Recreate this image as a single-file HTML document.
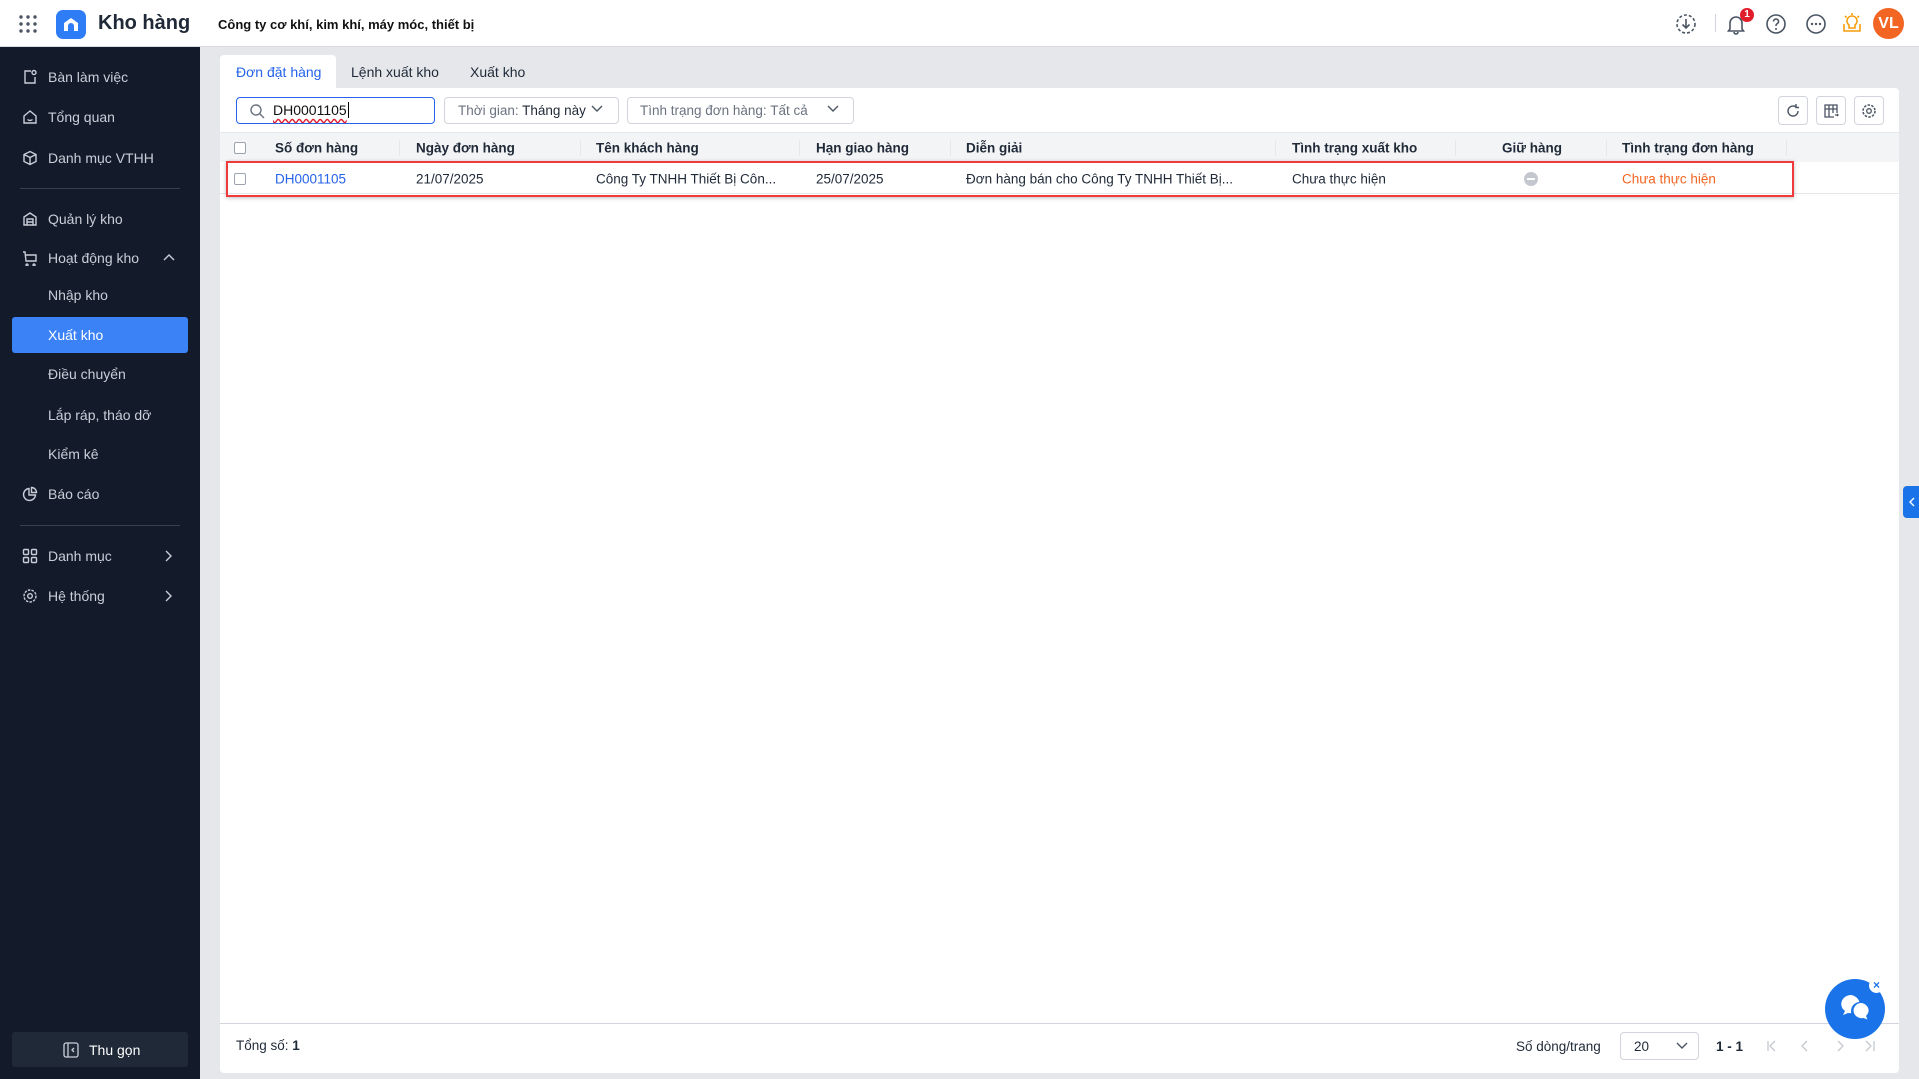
<!DOCTYPE html>
<html><head><meta charset="utf-8"><style>
*{box-sizing:border-box;margin:0;padding:0}
body{width:1919px;height:1079px;overflow:hidden;font-family:"Liberation Sans",sans-serif;font-size:14px;color:#1f2937;background:#e5e7eb;position:relative}
.a{position:absolute;white-space:nowrap}
#hdr{left:0;top:0;width:1919px;height:47px;background:#fff;border-bottom:1px solid #d9dbe0}
#sb{left:0;top:47px;width:200px;height:1032px;background:#131a2a}
.si{position:absolute;left:48px;color:#c9ced8;font-size:14px;transform:translateY(-50%)}
.ic{position:absolute;left:22px;transform:translateY(-50%)}
.hr{position:absolute;left:20px;width:160px;height:1px;background:#374151}
#card{left:220px;top:88px;width:1679px;height:985px;background:#fff;border-radius:0 4px 4px 4px}
.th{position:absolute;top:148px;transform:translateY(-50%);font-weight:bold;font-size:13.5px;color:#1f2937}
.td{position:absolute;top:179px;transform:translateY(-50%);font-size:13.5px;color:#1f2937}
.sep{position:absolute;top:140px;width:1px;height:16px;background:#e5e7eb}
.box{position:absolute;border:1px solid #d1d5db;border-radius:4px;background:#fff}
.cb{position:absolute;width:12px;height:12px;border:1px solid #9ca3af;border-radius:2px;background:#fff}
</style></head><body>
<div class="a" id="hdr"></div>
<svg class="a" style="left:19px;top:15px" width="18" height="18"><g fill="#4b5563"><circle cx="2" cy="2" r="1.7"/><circle cx="9" cy="2" r="1.7"/><circle cx="16" cy="2" r="1.7"/><circle cx="2" cy="9" r="1.7"/><circle cx="9" cy="9" r="1.7"/><circle cx="16" cy="9" r="1.7"/><circle cx="2" cy="16" r="1.7"/><circle cx="9" cy="16" r="1.7"/><circle cx="16" cy="16" r="1.7"/></g></svg>
<div class="a" style="left:56px;top:10px;width:30px;height:29px;background:#2f7df6;border-radius:7px"></div>
<svg class="a" style="left:61px;top:14px" width="20" height="20"><path d="M3 17V9l7-5 7 5v8h-4v-5a3 3 0 0 0-6 0v5z" fill="#fff"/></svg>
<div class="a" style="left:98px;top:12px;font-size:20px;font-weight:bold;color:#1f2937">Kho hàng</div>
<div class="a" style="left:218px;top:17px;font-size:13px;font-weight:bold;color:#111">Công ty cơ khí, kim khí, máy móc, thiết bị</div>
<svg class="a" style="left:1675px;top:13px" width="22" height="22"><circle cx="11" cy="11" r="9" fill="none" stroke="#4b5563" stroke-width="1.6" stroke-dasharray="3 2"/><path d="M11 6v9M7.5 11.5l3.5 3.5 3.5-3.5" fill="none" stroke="#4b5563" stroke-width="1.6"/></svg>
<div class="a" style="left:1715px;top:14px;width:1px;height:18px;background:#d1d5db"></div>
<svg class="a" style="left:1725px;top:13px" width="22" height="22"><path d="M5 16V10a6 6 0 0 1 12 0v6l1.5 2h-15zM9 19a2 2 0 0 0 4 0" fill="none" stroke="#4b5563" stroke-width="1.6"/></svg>
<div class="a" style="left:1740px;top:8px;width:14px;height:14px;border-radius:7px;background:#e11d2b;color:#fff;font-size:10px;font-weight:bold;text-align:center;line-height:14px">1</div>
<svg class="a" style="left:1765px;top:13px" width="22" height="22"><circle cx="11" cy="11" r="9" fill="none" stroke="#4b5563" stroke-width="1.6"/><path d="M8.5 8.5a2.5 2.5 0 1 1 3.5 2.3c-.7.4-1 .9-1 1.7v.5" fill="none" stroke="#4b5563" stroke-width="1.6"/><circle cx="11" cy="16" r="1" fill="#4b5563"/></svg>
<svg class="a" style="left:1805px;top:13px" width="22" height="22"><circle cx="11" cy="11" r="9" fill="none" stroke="#4b5563" stroke-width="1.6"/><g fill="#4b5563"><circle cx="7" cy="11" r="1.2"/><circle cx="11" cy="11" r="1.2"/><circle cx="15" cy="11" r="1.2"/></g></svg>
<svg class="a" style="left:1841px;top:12px" width="22" height="22"><path d="M11 4a5 5 0 0 0-3 9v3h6v-3a5 5 0 0 0-3-9zM3 12v7h16v-7M11 1v2M4 4l1.5 1.5M18 4l-1.5 1.5" fill="none" stroke="#f59e0b" stroke-width="1.6"/></svg>
<div class="a" style="left:1873px;top:8px;width:31px;height:31px;border-radius:50%;background:#f26522;color:#fff;font-weight:bold;font-size:16px;text-align:center;line-height:31px">VL</div>

<div class="a" id="sb">
<svg class="ic" style="top:30px" width="16" height="16"><path d="M9 2H3v12h10V8" fill="none" stroke="#c9ced8" stroke-width="1.4"/><circle cx="12" cy="3.5" r="2" fill="none" stroke="#c9ced8" stroke-width="1.4"/></svg><div class="si" style="top:30px">Bàn làm việc</div>
<svg class="ic" style="top:70px" width="16" height="16"><path d="M2 7l6-5 6 5v7H2zM5.5 10.5q2.5 2 5 0" fill="none" stroke="#c9ced8" stroke-width="1.4"/></svg><div class="si" style="top:70px">Tổng quan</div>
<svg class="ic" style="top:111px" width="16" height="16"><path d="M8 1.5l6 3v7l-6 3-6-3v-7zM2 4.5l6 3 6-3M8 7.5v7" fill="none" stroke="#c9ced8" stroke-width="1.4"/></svg><div class="si" style="top:111px">Danh mục VTHH</div>
<div class="hr" style="top:141px"></div>
<svg class="ic" style="top:172px" width="16" height="16"><path d="M2 6l6-4 6 4v8H2zM5 14V8h6v6M5 11h6" fill="none" stroke="#c9ced8" stroke-width="1.4"/></svg><div class="si" style="top:172px">Quản lý kho</div>
<svg class="ic" style="top:211px" width="18" height="16"><path d="M1 2h2l1 9h10V5H4M5 14a1 1 0 1 0 .1 0M12 14a1 1 0 1 0 .1 0" fill="none" stroke="#c9ced8" stroke-width="1.4"/></svg><div class="si" style="top:211px">Hoạt động kho</div>
<svg class="a" style="left:163px;top:206px" width="12" height="8"><path d="M1 7l5-5 5 5" fill="none" stroke="#c9ced8" stroke-width="1.4"/></svg>
<div class="si" style="top:248px">Nhập kho</div>
<div class="a" style="left:12px;top:270px;width:176px;height:36px;background:#3b82f6;border-radius:3px"></div>
<div class="si" style="top:288px;color:#fff">Xuất kho</div>
<div class="si" style="top:327px">Điều chuyển</div>
<div class="si" style="top:368px">Lắp ráp, tháo dỡ</div>
<div class="si" style="top:407px">Kiểm kê</div>
<svg class="ic" style="top:447px" width="16" height="16"><path d="M7 2.5a6 6 0 1 0 6.5 6.5H7zM9.5 1.5v5h5a5 5 0 0 0-5-5z" fill="none" stroke="#c9ced8" stroke-width="1.4"/></svg><div class="si" style="top:447px">Báo cáo</div>
<div class="hr" style="top:478px"></div>
<svg class="ic" style="top:509px" width="16" height="16"><g fill="none" stroke="#c9ced8" stroke-width="1.4"><rect x="1.5" y="1.5" width="5" height="5" rx="1"/><rect x="9.5" y="1.5" width="5" height="5" rx="1"/><rect x="1.5" y="9.5" width="5" height="5" rx="1"/><rect x="9.5" y="9.5" width="5" height="5" rx="1"/></g></svg><div class="si" style="top:509px">Danh mục</div>
<svg class="a" style="left:165px;top:503px" width="8" height="12"><path d="M1 1l5 5-5 5" fill="none" stroke="#c9ced8" stroke-width="1.4"/></svg>
<svg class="ic" style="top:549px" width="16" height="16"><circle cx="8" cy="8" r="2.3" fill="none" stroke="#c9ced8" stroke-width="1.4"/><circle cx="8" cy="8" r="6" fill="none" stroke="#c9ced8" stroke-width="1.4" stroke-dasharray="2.5 1.2"/></svg><div class="si" style="top:549px">Hệ thống</div>
<svg class="a" style="left:165px;top:543px" width="8" height="12"><path d="M1 1l5 5-5 5" fill="none" stroke="#c9ced8" stroke-width="1.4"/></svg>
<div class="a" style="left:12px;top:985px;width:176px;height:35px;background:#1f2937;border-radius:3px"></div>
<svg class="a" style="left:63px;top:995px" width="16" height="16"><rect x="1" y="1" width="14" height="14" rx="2" fill="none" stroke="#c9ced8" stroke-width="1.3"/><path d="M5 1v14M11 6l-2 2 2 2" fill="none" stroke="#c9ced8" stroke-width="1.3"/></svg>
<div class="a" style="left:89px;top:995px;color:#fff;font-size:14px">Thu gọn</div>
</div>

<div class="a" style="left:220px;top:55px;width:116px;height:34px;background:#fff;border-radius:4px 4px 0 0"></div>
<div class="a" style="left:236px;top:64px;color:#2563eb;font-size:14px">Đơn đặt hàng</div>
<div class="a" style="left:351px;top:64px;font-size:14px">Lệnh xuất kho</div>
<div class="a" style="left:470px;top:64px;font-size:14px">Xuất kho</div>
<div class="a" id="card"></div>

<div class="box" style="left:236px;top:97px;width:199px;height:27px;border-color:#2563eb"></div>
<svg class="a" style="left:249px;top:103px" width="16" height="16"><circle cx="7" cy="7" r="5" fill="none" stroke="#6b7280" stroke-width="1.4"/><path d="M11 11l4 4" stroke="#6b7280" stroke-width="1.4"/></svg>
<div class="a" style="left:273px;top:102px;font-size:14px;color:#111;text-decoration:underline wavy #e11d2b;text-underline-offset:3px">DH0001105<span style="border-left:1px solid #000;margin-left:1px"></span></div>
<div class="box" style="left:444px;top:97px;width:175px;height:27px"></div>
<div class="a" style="left:458px;top:103px;font-size:13.5px;color:#6b7280">Thời gian: <span style="color:#1f2937">Tháng này</span></div>
<svg class="a" style="left:591px;top:105px" width="12" height="8"><path d="M1 1l5 5 5-5" fill="none" stroke="#4b5563" stroke-width="1.4"/></svg>
<div class="box" style="left:627px;top:97px;width:227px;height:27px"></div>
<div class="a" style="left:640px;top:103px;font-size:13.5px;color:#6b7280">Tình trạng đơn hàng: Tất cả</div>
<svg class="a" style="left:827px;top:105px" width="12" height="8"><path d="M1 1l5 5 5-5" fill="none" stroke="#4b5563" stroke-width="1.4"/></svg>
<div class="box" style="left:1778px;top:96px;width:30px;height:29px"></div>
<svg class="a" style="left:1785px;top:103px" width="16" height="16"><path d="M13 8a5 5 0 1 1-2-4M11 1v3.5h3" fill="none" stroke="#4b5563" stroke-width="1.4"/></svg>
<div class="box" style="left:1816px;top:96px;width:30px;height:29px"></div>
<svg class="a" style="left:1823px;top:103px" width="16" height="16"><path d="M11 14H2V2h12v8M2 6h12M6 2v12M10 2v8M12 12h3M14 11l1 1-1 1" fill="none" stroke="#4b5563" stroke-width="1.3"/></svg>
<div class="box" style="left:1854px;top:96px;width:30px;height:29px"></div>
<svg class="a" style="left:1861px;top:103px" width="16" height="16"><circle cx="8" cy="8" r="2.3" fill="none" stroke="#4b5563" stroke-width="1.3"/><circle cx="8" cy="8" r="6" fill="none" stroke="#4b5563" stroke-width="1.5" stroke-dasharray="2.5 1.3"/></svg>

<div class="a" style="left:220px;top:132px;width:1679px;height:1px;background:#e5e7eb"></div>
<div class="a" style="left:220px;top:133px;width:1679px;height:29px;background:#f3f4f6"></div>
<div class="a" style="left:220px;top:193px;width:1679px;height:1px;background:#e5e7eb"></div>
<div class="cb" style="left:234px;top:142px"></div>
<div class="th" style="left:275px">Số đơn hàng</div><div class="sep" style="left:399px"></div>
<div class="th" style="left:416px">Ngày đơn hàng</div><div class="sep" style="left:580px"></div>
<div class="th" style="left:596px">Tên khách hàng</div><div class="sep" style="left:799px"></div>
<div class="th" style="left:816px">Hạn giao hàng</div><div class="sep" style="left:950px"></div>
<div class="th" style="left:966px">Diễn giải</div><div class="sep" style="left:1275px"></div>
<div class="th" style="left:1292px">Tình trạng xuất kho</div><div class="sep" style="left:1455px"></div>
<div class="th" style="left:1502px">Giữ hàng</div><div class="sep" style="left:1606px"></div>
<div class="th" style="left:1622px">Tình trạng đơn hàng</div><div class="sep" style="left:1786px"></div>

<div class="cb" style="left:234px;top:173px"></div>
<div class="td" style="left:275px;color:#2563eb">DH0001105</div>
<div class="td" style="left:416px">21/07/2025</div>
<div class="td" style="left:596px">Công Ty TNHH Thiết Bị Côn...</div>
<div class="td" style="left:816px">25/07/2025</div>
<div class="td" style="left:966px">Đơn hàng bán cho Công Ty TNHH Thiết Bị...</div>
<div class="td" style="left:1292px">Chưa thực hiện</div>
<div class="a" style="left:1524px;top:172px;width:14px;height:14px;border-radius:50%;background:#c4c8ce"><div style="position:absolute;left:3px;top:6px;width:8px;height:2px;background:#fff"></div></div>
<div class="td" style="left:1622px;color:#f26522">Chưa thực hiện</div>
<div class="a" style="left:226px;top:161px;width:1568px;height:36px;border:2.5px solid #ef3b3b;box-shadow:0 1px 4px rgba(0,0,0,.25)"></div>

<div class="a" style="left:220px;top:1023px;width:1679px;height:1px;background:#d1d5db"></div>
<div class="a" style="left:236px;top:1038px;font-size:13.5px">Tổng số: <b>1</b></div>
<div class="a" style="left:1516px;top:1039px;font-size:13.5px">Số dòng/trang</div>
<div class="box" style="left:1620px;top:1032px;width:79px;height:28px"></div>
<div class="a" style="left:1634px;top:1039px;font-size:13.5px">20</div>
<svg class="a" style="left:1676px;top:1042px" width="12" height="8"><path d="M1 1l5 5 5-5" fill="none" stroke="#4b5563" stroke-width="1.4"/></svg>
<div class="a" style="left:1716px;top:1039px;font-size:13.5px;font-weight:bold">1 - 1</div>
<svg class="a" style="left:1766px;top:1040px" width="110" height="12"><g fill="none" stroke="#c4c8ce" stroke-width="1.3"><path d="M2 1v10M9 1l-5 5 5 5M41 1l-5 5 5 5M72 1l5 5-5 5M100 1l5 5-5 5M108 1v10"/></g></svg>

<div class="a" style="left:1825px;top:979px;width:60px;height:60px;border-radius:50%;background:#1a73e8"></div>
<svg class="a" style="left:1837px;top:991px" width="38" height="36"><path d="M14 4a10 9 0 0 0-6 16l-2 4 5-2a10 9 0 1 0 3-18z" fill="#fff"/><circle cx="23" cy="20" r="9" fill="#1a73e8"/><path d="M23 12a8 7.5 0 0 1 6 13l1.5 3.5-4-1.5a8 7.5 0 1 1-3.5-15z" fill="#fff"/></svg>
<div class="a" style="left:1869px;top:978px;width:15px;height:15px;border-radius:50%;background:#fff;color:#1a73e8;font-size:12px;font-weight:bold;text-align:center;line-height:15px">×</div>
<div class="a" style="left:1903px;top:486px;width:16px;height:32px;background:#1a73e8;border-radius:4px 0 0 4px"></div>
<svg class="a" style="left:1908px;top:497px" width="7" height="10"><path d="M6 1L2 5l4 4" fill="none" stroke="#fff" stroke-width="1.4"/></svg>
</body></html>
